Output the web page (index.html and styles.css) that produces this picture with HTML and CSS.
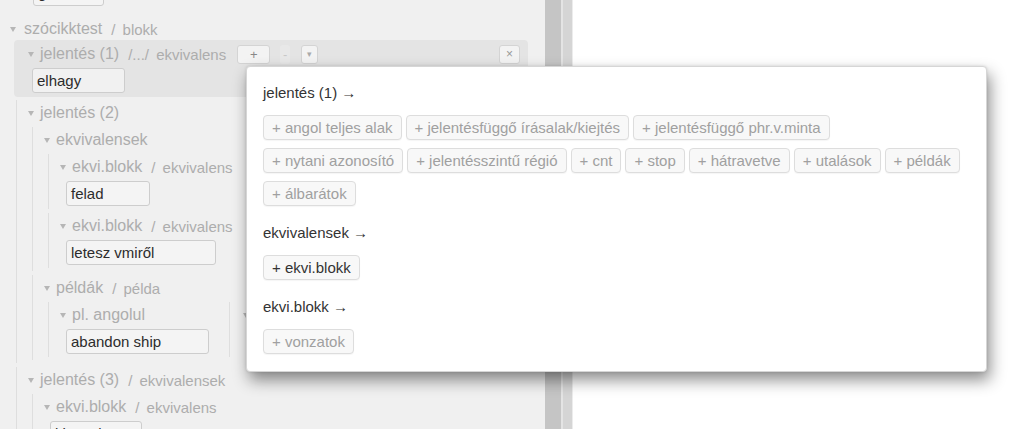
FILE: index.html
```html
<!DOCTYPE html>
<html lang="hu">
<head>
  <meta charset="UTF-8">
  <meta name="viewport" content="width=device-width, initial-scale=1.0">
  <title>Szócikk szerkesztő</title>
  <link rel="stylesheet" href="styles.css">
</head>
<body>

  <div class="app">

    <div class="editor">
      <div class="tree">

        <div class="field top">gé</div>

        <div class="label root">
          <span class="caret"></span><span class="name">szócikktest</span><span class="type"><span class="slash">/</span> blokk</span>
        </div>

        <div class="block">
          <div class="label">
            <span class="caret"></span><span class="name">jelentés (1)</span><span class="type"><span class="slash">/.../</span> ekvivalens</span>
            <button class="mini plus">+</button>
            <button class="mini flat">-</button>
            <button class="mini down">▾</button>
            <button class="mini close">×</button>
          </div>
          <div class="field w93">elhagy</div>
        </div>

        <div class="node top-node">
          <div class="label"><span class="caret"></span><span class="name">jelentés (2)</span></div>

          <div class="node">
            <div class="label"><span class="caret"></span><span class="name">ekvivalensek</span></div>

            <div class="node">
              <div class="label"><span class="caret"></span><span class="name">ekvi.blokk</span><span class="type"><span class="slash">/</span> ekvivalens</span></div>
              <div class="field w84">felad</div>
            </div>

            <div class="node">
              <div class="label"><span class="caret"></span><span class="name">ekvi.blokk</span><span class="type"><span class="slash">/</span> ekvivalens</span></div>
              <div class="field w150">letesz vmiről</div>
            </div>
          </div>

          <div class="node">
            <div class="label"><span class="caret"></span><span class="name">példák</span><span class="type"><span class="slash">/</span> példa</span></div>

            <div class="cols">
              <div class="node col">
                <div class="label"><span class="caret"></span><span class="name">pl. angolul</span></div>
                <div class="field w143">abandon ship</div>
              </div>
              <div class="node col second">
                <div class="label"><span class="caret"></span></div>
              </div>
            </div>
          </div>
        </div>

        <div class="node top-node">
          <div class="label"><span class="caret"></span><span class="name">jelentés (3)</span><span class="type"><span class="slash">/</span> ekvivalensek</span></div>

          <div class="node">
            <div class="label"><span class="caret"></span><span class="name">ekvi.blokk</span><span class="type"><span class="slash">/</span> ekvivalens</span></div>
            <div class="field w92">kivonul</div>
          </div>
        </div>

      </div>
    </div>

    <div class="divider"></div>
    <div class="preview"></div>

    <div class="popup">
      <div class="section">
        <div class="heading">jelentés (1) →</div>
        <div class="adds">
          <button class="add">+ angol teljes alak</button>
          <button class="add">+ jelentésfüggő írásalak/kiejtés</button>
          <button class="add">+ jelentésfüggő phr.v.minta</button>
          <button class="add">+ nytani azonosító</button>
          <button class="add">+ jelentésszintű régió</button>
          <button class="add">+ cnt</button>
          <button class="add">+ stop</button>
          <button class="add">+ hátravetve</button>
          <button class="add">+ utalások</button>
          <button class="add">+ példák</button>
          <button class="add">+ álbarátok</button>
        </div>
      </div>

      <div class="section">
        <div class="heading">ekvivalensek →</div>
        <div class="adds">
          <button class="add active">+ ekvi.blokk</button>
        </div>
      </div>

      <div class="section">
        <div class="heading">ekvi.blokk →</div>
        <div class="adds">
          <button class="add">+ vonzatok</button>
        </div>
      </div>
    </div>

  </div>

</body>
</html>
```

FILE: styles.css
```css
* {
  box-sizing: border-box;
}
html, body {
  margin: 0;
  padding: 0;
}
body {
  font-family: "Liberation Sans", Arial, sans-serif;
  background-color: #fff;
  overflow: hidden;
}
.app {
  display: flex;
  height: 429px;
  position: relative;
}

/* left editor tree */
.editor {
  width: 545px;
  background-color: #f0f0f0;
  overflow: hidden;
}
.tree {
  margin-top: -20px;
  padding: 0 17px 0 10px;
}
.label {
  display: flex;
  align-items: center;
  height: 20px;
  color: #adadad;
  font-size: 16px;
  white-space: nowrap;
}
.label.root {
  margin-top: 13px;
}
.caret {
  width: 0;
  height: 0;
  border-left: 3.5px solid transparent;
  border-right: 3.5px solid transparent;
  border-top: 5px solid #b6b6b6;
  margin-right: 6px;
  flex: none;
}
.label.root .caret {
  margin-right: 8px;
}
.type {
  margin-left: 9px;
  font-size: 15px;
}
.slash {
  margin-right: 3px;
}
.field {
  height: 25px;
  margin: 4px 0 0 6px;
  padding: 0 4px;
  border: 1px solid #cdcdcd;
  border-radius: 3px;
  background-color: #f4f4f4;
  color: #2c2c2c;
  font-size: 15px;
  line-height: 23px;
  white-space: nowrap;
  overflow: hidden;
}
.field.top {
  width: 71px;
  height: 26px;
  margin: 0 0 0 23px;
}
.w84 { width: 84px; }
.w92 { width: 92px; }
.w93 { width: 93px; }
.w143 { width: 143px; }
.w150 { width: 150px; }

.block {
  margin: 1px 0 0 4px;
  padding: 4px 8px 4px 14px;
  background-color: #e4e4e4;
  border-radius: 4px;
}
.block .field {
  margin-left: 4px;
  background-color: #f1f1f1;
}
.mini {
  height: 19px;
  padding: 0;
  border: 1px solid #d4d4d4;
  border-radius: 3px;
  background-color: #f3f3f3;
  color: #888;
  font-family: inherit;
  font-size: 13px;
  line-height: 17px;
}
.mini.plus {
  width: 33px;
  margin-left: 11px;
}
.mini.flat {
  width: 10px;
  margin-left: 10px;
  border-color: transparent;
  background-color: #e8e8e8;
  color: #c8c8c8;
}
.mini.down {
  width: 17px;
  margin-left: 11px;
  font-size: 9px;
  color: #aaa;
}
.mini.close {
  width: 21px;
  margin-left: auto;
  font-size: 12px;
  color: #999;
}

.node {
  margin: 4px 0 0 4px;
  padding: 3px 0 3px 11px;
  border-left: 1px solid #dedede;
}
.node.top-node {
  margin-left: 6px;
}
.block + .node {
  margin-top: 3px;
}
.cols {
  display: flex;
}
.node.col {
  width: 181px;
  flex: none;
}
.node.col.second {
  margin-left: 0;
  padding-left: 13px;
}

.divider {
  width: 28px;
  flex: none;
  background: linear-gradient(to right, #c5c5c5 0 16px, #e4e4e4 16px 18px, #d5d5d5 18px 27px, #ececec 27px 28px);
}
.preview {
  flex: 1;
  background-color: #fff;
}

/* popup with insertable elements */
.popup {
  position: absolute;
  left: 246px;
  top: 66px;
  width: 741px;
  padding: 17px 22px 17px 16px;
  background-color: #fff;
  border: 1px solid #d6d6d6;
  border-radius: 4px;
  box-shadow: 3px 8px 16px rgba(0, 0, 0, 0.45), 0 0 3px rgba(0, 0, 0, 0.12);
}
.section + .section {
  margin-top: 18px;
}
.heading {
  height: 18px;
  line-height: 18px;
  font-size: 15px;
  color: #333;
  margin-bottom: 13px;
}
.adds {
  display: flex;
  flex-wrap: wrap;
  gap: 8px 4px;
}
.add {
  height: 25px;
  padding: 0 8px;
  border: 1px solid #dddddd;
  border-radius: 4px;
  background-color: #f8f8f8;
  color: #a0a0a0;
  font-family: inherit;
  font-size: 15px;
  line-height: 23px;
  white-space: nowrap;
  box-shadow: 0 1px 1px rgba(0, 0, 0, 0.04);
}
.add.active {
  color: #333;
}
```
